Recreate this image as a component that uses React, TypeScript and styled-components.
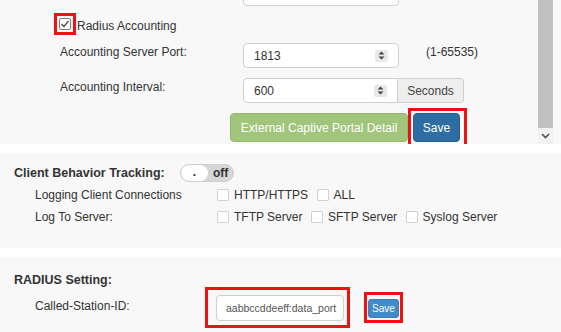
import React from 'react';
import styled, { createGlobalStyle } from 'styled-components';

const Global = createGlobalStyle`
  html, body { margin: 0; padding: 0; background: #fff; }
  body {
    font-family: "Liberation Sans", Arial, sans-serif;
    font-size: 12px;
    color: #333;
    width: 561px;
    height: 332px;
    overflow: hidden;
  }
  * { box-sizing: border-box; }
`;

const Page = styled.div`
  display: flex;
  flex-direction: column;
  width: 561px;
  height: 332px;
  overflow: hidden;
`;

const Panel = styled.section<{ $mt: number; $h: number }>`
  background: #f8f8f8;
  margin-top: ${p => p.$mt}px;
  height: ${p => p.$h}px;
  flex-shrink: 0;
  overflow: hidden;
`;

/* ---------- panel 1 (scrolled form) ---------- */
const ScrollArea = styled.div`
  display: flex;
  height: 100%;
`;

const Content = styled.div`
  flex: 1;
  display: flex;
  flex-direction: column;
`;

const ScrollTrack = styled.div`
  width: 15px;
  margin-right: 8px;
  display: flex;
  flex-direction: column;
`;

const Thumb = styled.div`
  flex: 1;
  background: #c1c1c1;
`;

const ArrowBtn = styled.div`
  height: 16px;
  background: #f1f1f1;
  display: flex;
  align-items: center;
  justify-content: center;
`;

const CheckRow = styled.label`
  display: flex;
  align-items: flex-start;
  padding-left: 59px;
  margin-top: 12px;
`;

const CheckText = styled.span`
  margin-left: 6px;
  margin-top: 1px;
  line-height: 14px;
`;

const CheckedBox = styled.span`
  position: relative;
  width: 12px;
  height: 12px;
  border: 1px solid #7a7a7a;
  border-radius: 2px;
  background: #fff;
  display: flex;
  align-items: center;
  justify-content: center;
  &::after {
    content: '';
    position: absolute;
    inset: -6px;
    border: 3px solid #ee1111;
    z-index: 2;
  }
`;

const FieldRow = styled.div<{ $mt: number }>`
  display: flex;
  align-items: flex-start;
  padding-left: 60px;
  margin-top: ${p => p.$mt}px;
  height: 25px;
  flex-shrink: 0;
`;

const FieldLabel = styled.div`
  width: 183px;
  line-height: 14px;
  padding-top: 2px;
`;

const Note = styled.div`
  margin-left: 27px;
  line-height: 14px;
  padding-top: 2px;
`;

const NumberInput = styled.div<{ $w: number; $grouped?: boolean }>`
  width: ${p => p.$w}px;
  height: 25px;
  background: #fff;
  border: 1px solid #cfcfcf;
  border-radius: ${p => (p.$grouped ? '4px 0 0 4px' : '4px')};
  display: flex;
  align-items: center;
  justify-content: space-between;
  padding: 0 10px 0 10px;
  color: #333;
`;

const Spinner = styled.span`
  width: 13px;
  height: 12px;
  background: #e8e8e8;
  border-radius: 2px;
  display: flex;
  align-items: center;
  justify-content: center;
`;

const Addon = styled.div`
  width: 66px;
  height: 25px;
  background: #eeeeee;
  border: 1px solid #cfcfcf;
  border-left: 0;
  border-radius: 0 4px 4px 0;
  display: flex;
  align-items: center;
  justify-content: center;
  color: #444;
`;

const ButtonRow = styled.div`
  display: flex;
  padding-left: 230px;
  margin-top: 10px;
`;

const Button = styled.button<{ $variant: 'green' | 'blue' }>`
  height: 29px;
  border-radius: 4px;
  border: 1px solid ${p => (p.$variant === 'green' ? '#93b96c' : '#285f8f')};
  background: ${p => (p.$variant === 'green' ? '#a0c57b' : '#2e6da4')};
  color: #fff;
  font-family: inherit;
  font-size: 12px;
  padding: 0;
  cursor: pointer;
`;

const GreenButton = styled(Button)`
  width: 178px;
`;

const SaveButton = styled(Button)`
  position: relative;
  width: 47px;
  margin-left: 5px;
  &::after {
    content: '';
    position: absolute;
    top: -6px;
    left: -6px;
    right: -8px;
    bottom: -7px;
    border: 3px solid #ee1111;
  }
`;

/* ---------- panel 2 ---------- */
const Section = styled.div<{ $pt: number }>`
  padding-top: ${p => p.$pt}px;
  display: flex;
  flex-direction: column;
`;

const TitleRow = styled.div`
  display: flex;
  align-items: center;
  height: 18px;
  padding-left: 14px;
`;

const Title = styled.div<{ $w?: number }>`
  font-weight: bold;
  font-size: 12.5px;
  line-height: 12px;
  width: ${p => (p.$w ? `${p.$w}px` : 'auto')};
`;

const Toggle = styled.div`
  width: 54px;
  height: 18px;
  border-radius: 9px;
  background: #d6d6d6;
  border: 1px solid #cfcfcf;
  display: flex;
  align-items: center;
  overflow: hidden;
`;

const Knob = styled.span`
  width: 27px;
  height: 100%;
  background: #fff;
  border-radius: 9px;
  display: flex;
  align-items: center;
  justify-content: center;
  font-weight: bold;
  line-height: 1;
  padding-bottom: 3px;
`;

const ToggleText = styled.span`
  margin-left: 5px;
  font-weight: bold;
  font-size: 12px;
`;

const OptionRow = styled.div<{ $mt?: number }>`
  display: flex;
  align-items: center;
  height: 22px;
  padding-left: 35px;
  margin-top: ${p => p.$mt ?? 0}px;
`;

const OptionLabel = styled.div`
  width: 182px;
  line-height: 14px;
`;

const Option = styled.label`
  display: flex;
  align-items: center;
  margin-right: 8.5px;
  line-height: 14px;
`;

const Box = styled.span`
  width: 12px;
  height: 12px;
  background: #fff;
  border: 1px solid #d2d2d2;
  border-radius: 1px;
  margin-right: 5px;
`;

/* ---------- panel 3 ---------- */
const StationRow = styled.div`
  display: flex;
  align-items: center;
  padding-left: 35px;
  margin-top: -2px;
`;

const StationLabel = styled.div`
  width: 170px;
  line-height: 14px;
  margin-bottom: 3px;
`;

const InputHighlight = styled.div`
  border: 3px solid #ee1111;
  padding: 5px 3px 4px 8px;
`;

const TextInput = styled.div`
  width: 128px;
  height: 26px;
  background: #fff;
  border: 1px solid #cfcfcf;
  border-radius: 4px;
  display: flex;
  align-items: center;
  padding-left: 9px;
  font-size: 10.5px;
  color: #555;
  white-space: nowrap;
`;

const ButtonHighlight = styled.div`
  margin-left: 14px;
  border: 3px solid #ee1111;
  padding: 4px 1px 2px 1px;
`;

const SmallSave = styled.button`
  width: 31px;
  height: 19px;
  border: 1px solid #3b7fbd;
  border-radius: 3px;
  background: #428bca;
  color: #fff;
  font-family: inherit;
  font-size: 10px;
  padding: 0;
  display: block;
`;

const SpinIcon = () => (
  <svg width="7" height="9" viewBox="0 0 7 9">
    <path d="M3.5 0.5 L6.5 3.5 H0.5 Z" fill="#444" />
    <path d="M3.5 8.5 L6.5 5.5 H0.5 Z" fill="#444" />
  </svg>
);

const CheckMark = () => (
  <svg width="10" height="10" viewBox="0 0 10 10">
    <path d="M1.5 5 L4 7.5 L8.5 1.8" fill="none" stroke="#444" strokeWidth="1.3" />
  </svg>
);

const Chevron = () => (
  <svg width="9" height="6" viewBox="0 0 9 6">
    <path d="M1 1 L4.5 4.5 L8 1" fill="none" stroke="#505050" strokeWidth="1.6" />
  </svg>
);

export default function App() {
  return (
    <Page>
      <Global />
      <Panel $mt={0} $h={144}>
        <ScrollArea>
          <Content>
            <FieldRow $mt={-19}>
              <FieldLabel />
              <NumberInput $w={156} />
            </FieldRow>
            <CheckRow>
              <CheckedBox>
                <CheckMark />
              </CheckedBox>
              <CheckText>Radius Accounting</CheckText>
            </CheckRow>
            <FieldRow $mt={10}>
              <FieldLabel>Accounting Server Port:</FieldLabel>
              <NumberInput $w={156}>
                <span>1813</span>
                <Spinner>
                  <SpinIcon />
                </Spinner>
              </NumberInput>
              <Note>(1-65535)</Note>
            </FieldRow>
            <FieldRow $mt={10}>
              <FieldLabel>Accounting Interval:</FieldLabel>
              <NumberInput $w={155} $grouped>
                <span>600</span>
                <Spinner>
                  <SpinIcon />
                </Spinner>
              </NumberInput>
              <Addon>Seconds</Addon>
            </FieldRow>
            <ButtonRow>
              <GreenButton $variant="green">External Captive Portal Detail</GreenButton>
              <SaveButton $variant="blue">Save</SaveButton>
            </ButtonRow>
          </Content>
          <ScrollTrack>
            <Thumb />
            <ArrowBtn>
              <Chevron />
            </ArrowBtn>
          </ScrollTrack>
        </ScrollArea>
      </Panel>

      <Panel $mt={9} $h={95}>
        <Section $pt={11}>
          <TitleRow>
            <Title $w={166}>Client Behavior Tracking:</Title>
            <Toggle>
              <Knob>.</Knob>
              <ToggleText>off</ToggleText>
            </Toggle>
          </TitleRow>
          <OptionRow $mt={2}>
            <OptionLabel>Logging Client Connections</OptionLabel>
            <Option>
              <Box />
              HTTP/HTTPS
            </Option>
            <Option>
              <Box />
              ALL
            </Option>
          </OptionRow>
          <OptionRow>
            <OptionLabel>Log To Server:</OptionLabel>
            <Option>
              <Box />
              TFTP Server
            </Option>
            <Option>
              <Box />
              SFTP Server
            </Option>
            <Option>
              <Box />
              Syslog Server
            </Option>
          </OptionRow>
        </Section>
      </Panel>

      <Panel $mt={9} $h={75}>
        <Section $pt={14}>
          <TitleRow>
            <Title>RADIUS Setting:</Title>
          </TitleRow>
          <StationRow>
            <StationLabel>Called-Station-ID:</StationLabel>
            <InputHighlight>
              <TextInput>aabbccddeeff:data_port</TextInput>
            </InputHighlight>
            <ButtonHighlight>
              <SmallSave>Save</SmallSave>
            </ButtonHighlight>
          </StationRow>
        </Section>
      </Panel>
    </Page>
  );
}
